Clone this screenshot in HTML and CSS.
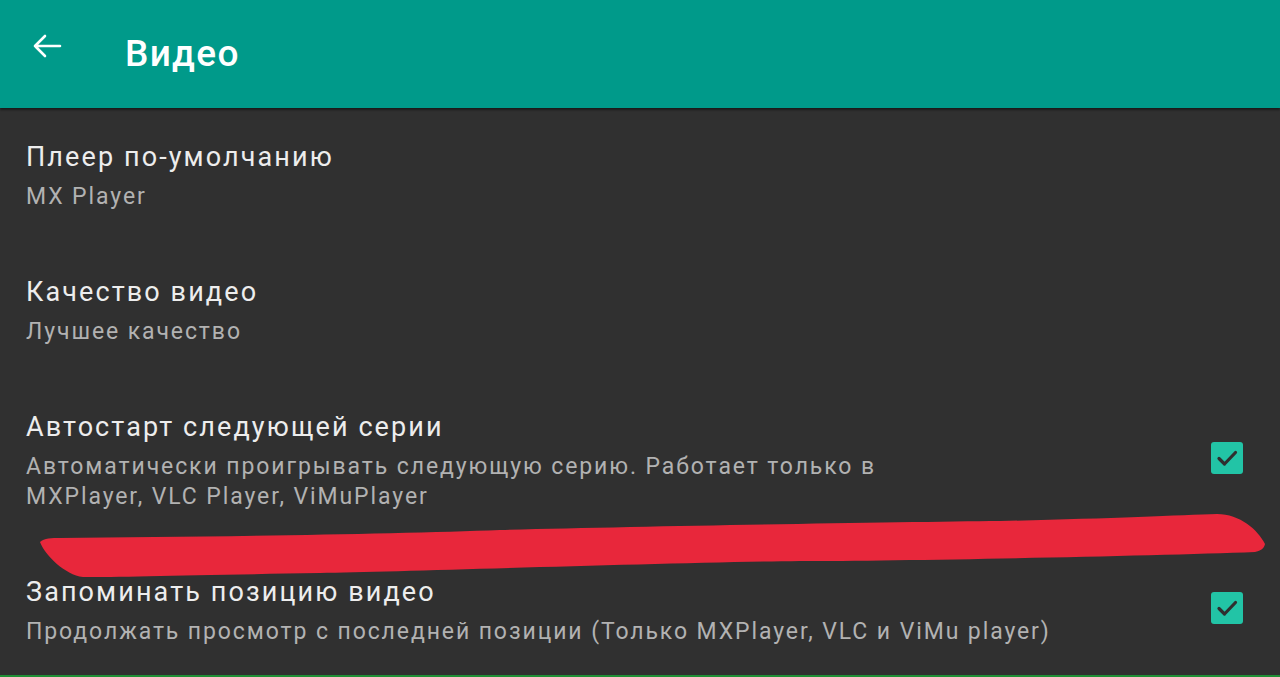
FILE: index.html
```html
<!DOCTYPE html>
<html lang="ru">
<head>
  <meta charset="UTF-8">
  <title>Видео</title>
  <link rel="stylesheet" href="styles.css">
</head>
<body>

  <header class="toolbar">
    <button class="back" aria-label="Назад">
      <svg width="30" height="24" viewBox="0 0 30 24">
        <path d="M28 12H3M13 2L3 12l10 10" fill="none" stroke="#fff" stroke-width="2.6" stroke-linecap="round" stroke-linejoin="round"/>
      </svg>
    </button>
    <h1>Видео</h1>
  </header>

  <main class="settings">
    <div class="pref">
      <div class="pref-text">
        <div class="pref-title">Плеер по-умолчанию</div>
        <div class="pref-summary">MX Player</div>
      </div>
    </div>

    <div class="pref">
      <div class="pref-text">
        <div class="pref-title">Качество видео</div>
        <div class="pref-summary">Лучшее качество</div>
      </div>
    </div>

    <div class="pref">
      <div class="pref-text">
        <div class="pref-title">Автостарт следующей серии</div>
        <div class="pref-summary">Автоматически проигрывать следующую серию. Работает только в<br>MXPlayer, VLC Player, ViMuPlayer</div>
      </div>
      <span class="check">
        <svg width="32" height="32" viewBox="0 0 32 32">
          <path d="M8 16.5l5.5 5.5L24.5 10.5" fill="none" stroke="#2f2f2f" stroke-width="3.2" stroke-linecap="round" stroke-linejoin="round"/>
        </svg>
      </span>
    </div>

    <div class="pref">
      <div class="pref-text">
        <div class="pref-title">Запоминать позицию видео</div>
        <div class="pref-summary">Продолжать просмотр с последней позиции (Только MXPlayer, VLC и ViMu player)</div>
      </div>
      <span class="check">
        <svg width="32" height="32" viewBox="0 0 32 32">
          <path d="M8 16.5l5.5 5.5L24.5 10.5" fill="none" stroke="#2f2f2f" stroke-width="3.2" stroke-linecap="round" stroke-linejoin="round"/>
        </svg>
      </span>
    </div>
  </main>

  <!-- red marker stroke drawn over the list -->
  <svg class="marker" width="1280" height="677" viewBox="0 0 1280 677">
    <path d="M40 542 C44 538 52 538 60 538 C200 537 400 534 500 530 C650 526 900 522 1000 521 C1100 519 1180 515 1217 514 C1240 514 1258 530 1265 544 C1264 549 1260 551 1255 552 C1150 556 900 561 800 561 C650 563 400 572 320 573 C200 575 120 577 83 577 C65 575 45 555 40 542 Z" fill="#e8273b"/>
  </svg>

  <div class="navline"></div>

</body>
</html>
```

FILE: styles.css
```css
body {
  margin: 0;
  background-color: #303030;
  font-family: Roboto, "Noto Sans", sans-serif;
  height: 677px;
  overflow: hidden;
  position: relative;
}

.toolbar {
  height: 108px;
  background-color: #009a8a;
  display: flex;
  align-items: flex-start;
  box-shadow: 0 2px 2px rgba(0,0,0,0.45);
  position: relative;
  z-index: 1;
}

.back {
  background: none;
  border: none;
  padding: 0;
  margin: 34px 0 0 32px;
  width: 30px;
  height: 24px;
  cursor: pointer;
}

.back svg {
  display: block;
}

.toolbar h1 {
  margin: 30px 0 0 63px;
  font-size: 37px;
  font-weight: 500;
  line-height: 48px;
  color: #fff;
  letter-spacing: 1.3px;
}

.settings {
  display: flex;
  flex-direction: column;
}

.pref {
  display: flex;
  align-items: center;
  justify-content: space-between;
  padding: 31px 37px 31px 26px;
}

.pref-title {
  font-size: 27px;
  line-height: 36px;
  color: #ededed;
  letter-spacing: 2.1px;
}

.pref-summary {
  margin-top: 7px;
  font-size: 23px;
  line-height: 30px;
  color: #b2b2b2;
  letter-spacing: 1.9px;
}

.check {
  width: 32px;
  height: 32px;
  margin-bottom: 6px;
  background-color: #22c4a6;
  border-radius: 3px;
  flex-shrink: 0;
}

.check svg {
  display: block;
}

.marker {
  position: absolute;
  left: 0;
  top: 0;
  pointer-events: none;
}

.navline {
  position: absolute;
  left: 0;
  bottom: 0;
  width: 100%;
  height: 2px;
  background-color: #1f8f35;
}
```
